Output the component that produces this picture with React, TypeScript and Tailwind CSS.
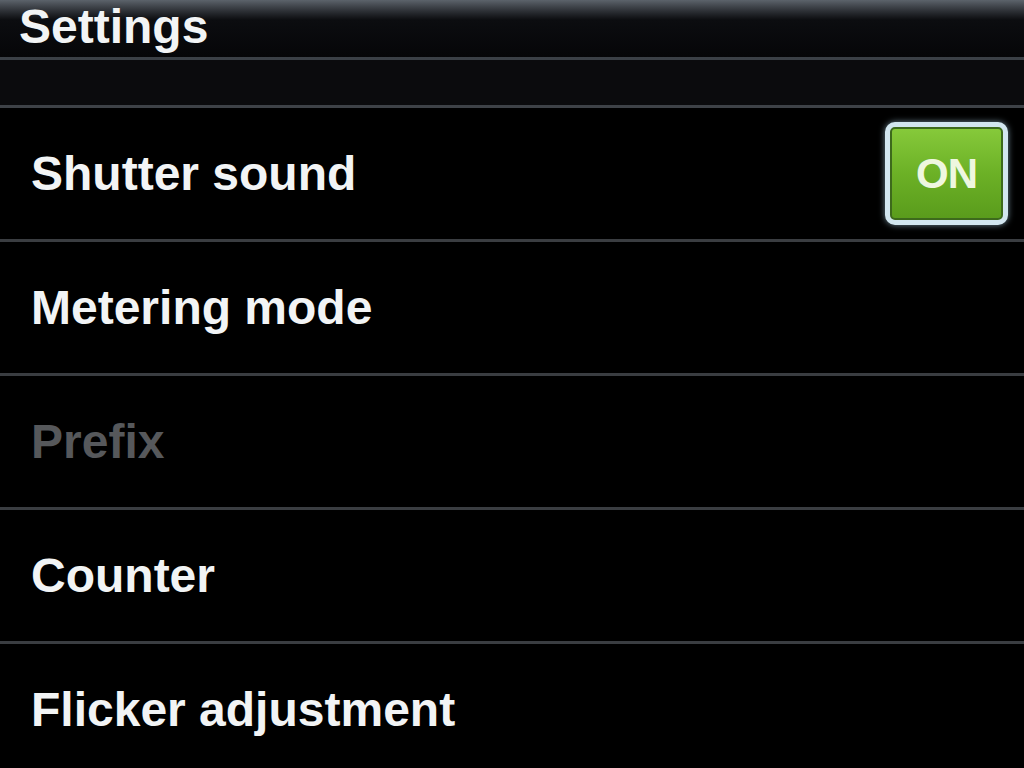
const rows = [
  { label: "Shutter sound", toggle: true },
  { label: "Metering mode" },
  { label: "Prefix", disabled: true },
  { label: "Counter" },
  { label: "Flicker adjustment" },
];

function OnToggle() {
  return (
    <div className="rounded-[10px] border-[5px] border-[#d2e6ef] bg-[#3d6a1c] p-[2px] shadow-[0_0_6px_rgba(180,220,240,0.6)]">
      <div className="flex h-[89px] w-[109px] items-center justify-center rounded-[3px] bg-gradient-to-b from-[#86c93a] via-[#6cb126] to-[#5a9c1c]">
        <span className="text-[42px] font-bold leading-none tracking-[-1px] text-[#eef7e0]">ON</span>
      </div>
    </div>
  );
}

export default function App() {
  return (
    <div className="flex h-[768px] w-[1024px] flex-col overflow-hidden bg-black font-['Liberation_Sans',Arial,sans-serif] text-[#f2f4f5]">
      <div className="h-[57px] shrink-0 bg-gradient-to-b from-[#5c636b] via-[#0c0d10] via-35% to-[#060608] px-[19px]">
        <div className="pt-[2px] text-[48px] font-bold leading-[50px]">Settings</div>
      </div>
      <div className="h-[3px] shrink-0 bg-[#3b4046]" />
      <div className="h-[45px] shrink-0 bg-[#0b0b0d]" />
      <div className="h-[3px] shrink-0 bg-[#3e4247]" />
      {rows.map((r, i) => (
        <div key={r.label} className="flex shrink-0 flex-col">
          <div className="flex h-[131px] items-center justify-between pl-[31px] pr-[16px]">
            <span className={"text-[48px] font-bold " + (r.disabled ? "text-[#56585b]" : "")}>
              {r.label}
            </span>
            {r.toggle && <OnToggle />}
          </div>
          {i < rows.length - 1 && <div className="h-[3px] bg-[#3a3d41]" />}
        </div>
      ))}
    </div>
  );
}
